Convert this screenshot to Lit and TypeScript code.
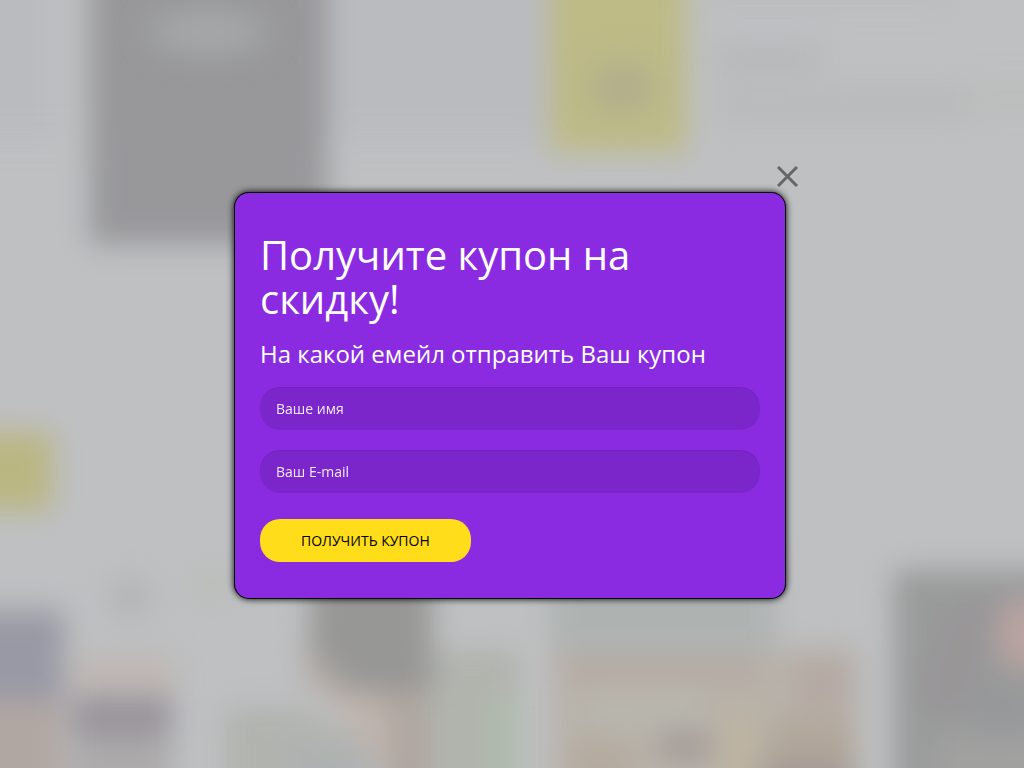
import { LitElement, html, css } from "lit";
import { customElement } from "lit/decorators.js";

@customElement("page-backdrop")
class PageBackdrop extends LitElement {
  static styles = css`
    :host {
      display: block;
    }
    .scene {
      display: block;
      width: 100%;
      height: 100%;
    }
  `;

  render() {
    return html`
      <svg class="scene" viewBox="0 0 1024 768" preserveAspectRatio="xMidYMid slice" aria-hidden="true">
        <defs>
          <filter id="soft" filterUnits="userSpaceOnUse" x="-80" y="-80" width="1184" height="928" color-interpolation-filters="sRGB">
            <feGaussianBlur stdDeviation="14" />
          </filter>
          <filter id="softer" filterUnits="userSpaceOnUse" x="-80" y="-80" width="1184" height="928" color-interpolation-filters="sRGB">
            <feGaussianBlur stdDeviation="16" />
          </filter>
        </defs>
        <rect x="-200" y="-200" width="1424" height="1168" fill="#bfc0c2" />
        <g filter="url(#soft)">
          <rect x="-60" y="-60" width="610" height="200" fill="#babbbf" />
          <rect x="50" y="-60" width="40" height="200" fill="#bebfc0" />
          <rect x="90" y="-60" width="237" height="304" fill="#98989b" />
          <rect x="550" y="-60" width="136" height="212" fill="#bebb87" />
          <rect x="-60" y="432" width="112" height="78" fill="#bab682" />
          <rect x="715" y="48" width="105" height="22" fill="#b4b5b7" />
          <rect x="715" y="86" width="255" height="36" fill="#b9babb" />
          <rect x="970" y="84" width="110" height="30" fill="#bcbdbc" />
          <rect x="700" y="-30" width="250" height="34" fill="#bbbcbe" />
          <circle cx="130" cy="598" r="20" fill="#b2b3b5" />
          <circle cx="210" cy="586" r="18" fill="#bbbdb8" />

          <rect x="-60" y="610" width="124" height="90" fill="#9999a5" />
          <rect x="-60" y="700" width="124" height="140" fill="#b1a7a2" />
          <rect x="72" y="655" width="102" height="40" fill="#bfb7b3" />
          <rect x="72" y="696" width="100" height="40" fill="#98949b" />
          <rect x="72" y="736" width="100" height="102" fill="#acaaab" />

          <path d="M225 708H300L370 745V840H225Z" fill="#b1b3ae" />
          <rect x="290" y="745" width="80" height="90" fill="#adb1b1" />
          <path d="M310 560H432V690H345L310 660Z" fill="#979795" />
          <path d="M304 640L350 690L304 690Z" fill="#b5aba5" />
          <path d="M330 690H430V840H400L375 740Z" fill="#aea69f" />
          <path d="M330 700L375 690L395 735L380 768Z" fill="#c0b4ae" />
          <rect x="432" y="650" width="88" height="190" fill="#b1b3ad" />
          <rect x="488" y="690" width="34" height="150" fill="#b0bbae" />

          <rect x="550" y="560" width="225" height="90" fill="#aeb3b2" />
          <rect x="552" y="648" width="305" height="194" fill="#b7b2a9" />
          <rect x="560" y="656" width="200" height="26" fill="#b5aaa4" />
          <rect x="795" y="654" width="60" height="60" fill="#b5aaa3" />
          <rect x="590" y="694" width="110" height="30" fill="#b9b7af" />
          <rect x="570" y="742" width="60" height="90" fill="#b5aa9f" />
          <ellipse cx="685" cy="746" rx="30" ry="16" fill="#a59c98" />
          <rect x="722" y="714" width="34" height="130" fill="#beb4a1" />
          <rect x="770" y="722" width="84" height="40" fill="#b1a699" />
          <rect x="760" y="762" width="94" height="60" fill="#a49995" />

          <rect x="894" y="570" width="210" height="270" fill="#999a9a" />
          <path d="M955 610L995 600L965 710L920 700Z" fill="#999598" />
          <ellipse cx="1026" cy="634" rx="30" ry="38" fill="#b9a4a0" />
          <ellipse cx="998" cy="710" rx="28" ry="24" fill="#96989a" />
          <rect x="935" y="735" width="150" height="100" fill="#a1a1a0" />
        </g>
        <g filter="url(#softer)">
          <ellipse cx="208" cy="32" rx="60" ry="22" fill="#a6a8a8" />
          <ellipse cx="622" cy="88" rx="36" ry="28" fill="#b1af8c" />
        </g>
      </svg>
    `;
  }
}

@customElement("app-root")
class AppRoot extends LitElement {
  static styles = css`
    :host {
      display: block;
      font-family: "Open Sans", "Noto Sans", sans-serif;
      font-size: 14px;
      color: #fff;
    }
    *,
    *::before,
    *::after {
      box-sizing: border-box;
    }
    .page {
      display: grid;
      min-height: 100vh;
      overflow: hidden;
    }
    .backdrop,
    .overlay {
      grid-area: 1 / 1;
    }
    .backdrop {
      height: 100%;
      min-height: 0;
      contain: size;
    }
    .overlay {
      position: relative;
      display: grid;
      grid-template-columns: minmax(0, 550px);
      justify-content: center;
      align-content: center;
      padding: 22px 4px 0 0;
    }
    .modal {
      position: relative;
      padding: 40px 25px 36px;
      border-radius: 14px;
      background: #8a2be2;
      box-shadow: 0 0 0 1px #000, 0 0 7px 1px #000;
    }
    .title {
      margin: 0 0 20px;
      font-size: 40px;
      line-height: 44px;
      font-weight: 400;
    }
    .subtitle {
      margin: 0 0 20px;
      font-size: 24px;
      line-height: 26px;
      font-weight: 400;
    }
    .form {
      display: flex;
      flex-direction: column;
      align-items: flex-start;
      gap: 20px;
    }
    .field {
      display: block;
      width: 100%;
    }
    .input {
      display: block;
      width: 100%;
      height: 43px;
      padding: 0 16px;
      border: 0;
      border-radius: 20px;
      background: rgba(0, 0, 0, 0.1);
      box-shadow: inset 0 1px 1px rgba(0, 0, 0, 0.075);
      font: inherit;
      color: #fff;
    }
    .input::placeholder {
      color: #fff;
      opacity: 0.9;
    }
    .submit {
      height: 43px;
      margin: 6px 0 0;
      padding: 0 41px;
      border: 0;
      border-radius: 20px;
      background: #ffdd1b;
      font: inherit;
      color: #000;
      text-transform: uppercase;
      cursor: pointer;
    }
    .close {
      position: absolute;
      top: -33px;
      right: -19px;
      display: grid;
      place-items: center;
      width: 33px;
      height: 33px;
      padding: 0;
      border: 0;
      background: none;
      color: #666;
      cursor: pointer;
    }
  `;

  render() {
    return html`
      <div class="page">
        <page-backdrop class="backdrop"></page-backdrop>
        <div class="overlay">
          <section class="modal" role="dialog" aria-modal="true" aria-labelledby="title">
            <h1 class="title" id="title">Получите купон на скидку!</h1>
            <h3 class="subtitle">На какой емейл отправить Ваш купон</h3>
            <form class="form" @submit=${(e: Event) => e.preventDefault()}>
              <div class="field">
                <input class="input" id="name" type="text" placeholder="Ваше имя" aria-label="Ваше имя" />
              </div>
              <div class="field">
                <input class="input" id="email" type="email" placeholder="Ваш E-mail" aria-label="Ваш E-mail" />
              </div>
              <button class="submit" type="submit">Получить купон</button>
            </form>
            <button class="close" type="button" aria-label="Закрыть">
              <svg width="21" height="21" viewBox="0 0 21 21" fill="none" stroke="currentColor" stroke-width="3">
                <path d="M1 1L20 20M20 1L1 20" />
              </svg>
            </button>
          </section>
        </div>
      </div>
    `;
  }
}
